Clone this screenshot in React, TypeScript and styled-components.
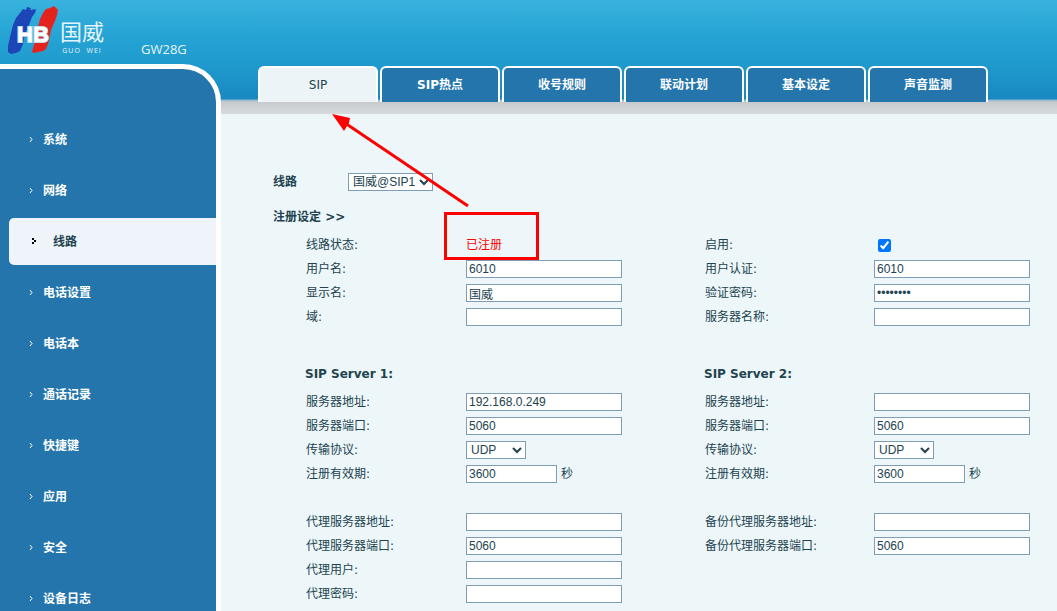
import React from "react";
import styled, { createGlobalStyle, css } from "styled-components";

const GlobalStyle = createGlobalStyle`
  *, *::before, *::after { box-sizing: border-box; }
  body {
    margin: 0;
    color: #21434f;
    background: #edf6f8;
    font: 12px/16px "DejaVu Sans", "Noto Sans CJK SC", sans-serif;
  }
`;

const Shell = styled.div`
  display: flex;
  height: 100vh;
  overflow: hidden;
  background:
    linear-gradient(#3ab2de, #25a4d4 35px, #1e98cc 70px, #1888c2 99px, #8fb9cd 100px, #c5cbce 102px) 0 0 / 100% 102px no-repeat,
    linear-gradient(#c6cacd, #d7dbde) 0 102px / 100% 12px no-repeat,
    #edf6f8;
`;

const Side = styled.div`
  flex: 0 0 221px;
  display: flex;
  flex-direction: column;
`;

const Brand = styled.header`
  flex: none;
  display: flex;
  align-items: flex-end;
  height: 64px;
  padding: 0 0 5px 6px;
  color: #e4f4fb;
`;

const Wordmark = styled.div`
  display: flex;
  flex-direction: column;
  align-items: center;
  width: 44px;
  margin: 0 37px 3px 0;
  font: 22px/32px "Noto Sans CJK SC", sans-serif;
`;

const Latin = styled.span`
  font: 7px/10px "Open Sans", sans-serif;
  letter-spacing: 1px;
  white-space: pre;
`;

const Model = styled.span`
  padding-bottom: 2px;
  font: 13px/16px "Open Sans", sans-serif;
`;

const Nav = styled.nav`
  flex: 1 0 auto;
  display: flex;
  flex-direction: column;
  gap: 4px;
  padding: 47px 0 0 9px;
  border: 5px solid #fff;
  border-width: 5px 5px 0 0;
  border-top-right-radius: 38px;
  background: #2375ac;
`;

const NavItem = styled.a<{ $active?: boolean }>`
  display: flex;
  align-items: center;
  gap: 10px;
  height: 47px;
  padding-left: 20px;
  color: #fff;
  font-weight: 700;
  text-decoration: none;
  ${(p) =>
    p.$active &&
    css`
      gap: 16px;
      padding-left: 22px;
      border-radius: 5px 0 0 5px;
      color: #21434f;
      background: #eff4fa;
    `}
`;

const Main = styled.div`
  flex: 1;
  min-width: 0;
`;

const Tabs = styled.nav`
  display: flex;
  align-items: flex-end;
  gap: 2px;
  height: 102px;
  padding-left: 37px;
`;

const Tab = styled.a<{ $active?: boolean }>`
  display: flex;
  align-items: center;
  justify-content: center;
  width: 120px;
  height: 36px;
  border: 2px solid #fff;
  border-bottom: 0;
  border-radius: 6px 6px 0 0;
  color: ${(p) => (p.$active ? "#21434f" : "#fff")};
  background: ${(p) => (p.$active ? "#edf4f8" : "#2375ac")};
  font-weight: ${(p) => (p.$active ? 400 : 700)};
  text-decoration: none;
`;

const Form = styled.form`
  padding: 70px 27px 0 52px;
`;

const LineRow = styled.div`
  display: flex;
  align-items: center;
  height: 20px;
  font-weight: 700;

  label { width: 75px; }
`;

const SectionTitle = styled.h2`
  margin: 17px 0 8px;
  font: inherit;
  font-weight: 700;
`;

const Columns = styled.div`
  display: grid;
  grid-template-columns: 399px 1fr;
  padding-left: 32px;
`;

const Group = styled.div<{ $labelWidth: number }>`
  display: grid;
  grid-template-columns: ${(p) => p.$labelWidth}px 1fr;
  grid-auto-rows: 24px;
  align-items: center;
  align-content: start;

  label { padding-left: 1px; }
`;

const GroupTitle = styled.h3`
  margin: 0;
  padding: 37px 0 8px;
  font-size: 12px;
  line-height: 16px;
`;

const Control = styled.div`
  display: flex;
  align-items: center;
  gap: 4px;
`;

const fieldLook = css`
  height: 18px;
  margin: 0;
  border: 1px solid #7f9db9;
  border-radius: 0;
  color: #21434f;
  background: #fff;
  font: 12px "Liberation Sans", "Noto Sans CJK SC", sans-serif;
`;

const TextInput = styled.input<{ $short?: boolean }>`
  ${fieldLook}
  width: ${(p) => (p.$short ? 91 : 156)}px;
  padding: 0 2px;
`;

const Select = styled.select<{ $wide?: boolean }>`
  ${fieldLook}
  width: ${(p) => (p.$wide ? 85 : 60)}px;
  padding: 0;
`;

const Check = styled.input`
  width: 13px;
  height: 13px;
  margin: 0 0 0 4px;
  accent-color: #0075ff;
`;

const Status = styled.output`
  color: #f00;
`;

const Annotation = styled.svg`
  position: absolute;
  left: 325px;
  top: 108px;
  pointer-events: none;
`;

const LogoMark = () => (
  <svg width="54" height="54" viewBox="0 0 54 54" aria-hidden="true">
    <path
      d="M14 8 17 4 20 5 21 2 25 3 24 5 30 4 29 8 26 12 23 20 19 29 17 39 14 46 10 48 5 49 2 47 2 41 4 32 7 20 10 13Z"
      fill="#1c46b8"
    />
    <path
      d="M37 8 40 4 44 3 48 1 50 3 52 5 51 10 49 16 45 25 43 36 40 44 37 46 28 48 26 47 28 40 31 26 34 14Z"
      fill="#e5231e"
    />
    <text
      x="11"
      y="37"
      fontFamily="Liberation Sans"
      fontWeight="700"
      fontSize="22"
      fill="#fff"
      stroke="#c3dcf3"
      strokeWidth="2"
      paintOrder="stroke"
    >
      HB
    </text>
  </svg>
);

const Chevron = () => (
  <svg width="4" height="7" viewBox="0 0 4 7" aria-hidden="true">
    <path d="M1 1 3 3.5 1 6" fill="none" stroke="currentColor" strokeWidth="1" />
  </svg>
);

const ActiveMark = () => (
  <svg width="6" height="8" viewBox="0 0 6 8" aria-hidden="true">
    <path d="M1 0h2v2H1zM3 2h2v2H3zM1 4h2v2H1z" fill="#000" />
  </svg>
);

type FieldSpec = {
  id: string;
  label: string;
  value?: string;
  kind?: "status" | "check" | "password" | "select" | "short" | "gap";
};

const Field = ({ id, label, value = "", kind }: FieldSpec) => {
  if (kind === "gap") {
    return (
      <>
        <span />
        <span />
      </>
    );
  }
  return (
    <>
      <label htmlFor={id}>{label}:</label>
      <Control>
        {kind === "status" && <Status id={id}>{value}</Status>}
        {kind === "check" && <Check id={id} type="checkbox" defaultChecked />}
        {kind === "select" && (
          <Select id={id} defaultValue={value}>
            <option>UDP</option>
            <option>TCP</option>
            <option>TLS</option>
          </Select>
        )}
        {kind === "short" && (
          <>
            <TextInput id={id} $short defaultValue={value} />
            秒
          </>
        )}
        {(kind === undefined || kind === "password") && (
          <TextInput id={id} type={kind ?? "text"} defaultValue={value} />
        )}
      </Control>
    </>
  );
};

const Fields = ({ items, labelWidth }: { items: FieldSpec[]; labelWidth: number }) => (
  <Group $labelWidth={labelWidth}>
    {items.map((f) => (
      <Field key={f.id} {...f} />
    ))}
  </Group>
);

const menu = ["系统", "网络", "线路", "电话设置", "电话本", "通话记录", "快捷键", "应用", "安全", "设备日志"];
const tabs = ["SIP", "SIP热点", "收号规则", "联动计划", "基本设定", "声音监测"];

const account: FieldSpec[] = [
  { id: "status", label: "线路状态", value: "已注册", kind: "status" },
  { id: "user", label: "用户名", value: "6010" },
  { id: "display", label: "显示名", value: "国威" },
  { id: "realm", label: "域" },
];
const auth: FieldSpec[] = [
  { id: "enable", label: "启用", kind: "check" },
  { id: "authUser", label: "用户认证", value: "6010" },
  { id: "authPass", label: "验证密码", value: "password", kind: "password" },
  { id: "serverName", label: "服务器名称" },
];
const server = (n: number, address: string): FieldSpec[] => [
  { id: `addr${n}`, label: "服务器地址", value: address },
  { id: `port${n}`, label: "服务器端口", value: "5060" },
  { id: `proto${n}`, label: "传输协议", value: "UDP", kind: "select" },
  { id: `expire${n}`, label: "注册有效期", value: "3600", kind: "short" },
  { id: `gap${n}`, label: "", kind: "gap" },
];
const server1: FieldSpec[] = [
  ...server(1, "192.168.0.249"),
  { id: "proxyAddr", label: "代理服务器地址" },
  { id: "proxyPort", label: "代理服务器端口", value: "5060" },
  { id: "proxyUser", label: "代理用户" },
  { id: "proxyPass", label: "代理密码" },
];
const server2: FieldSpec[] = [
  ...server(2, ""),
  { id: "backupAddr", label: "备份代理服务器地址" },
  { id: "backupPort", label: "备份代理服务器端口", value: "5060" },
];

export default function App() {
  return (
    <>
      <GlobalStyle />
      <Shell>
        <Side>
          <Brand>
            <LogoMark />
            <Wordmark>
              国威
              <Latin>GUO  WEI</Latin>
            </Wordmark>
            <Model>GW28G</Model>
          </Brand>
          <Nav>
            {menu.map((m) => (
              <NavItem key={m} href="#" $active={m === "线路"}>
                {m === "线路" ? <ActiveMark /> : <Chevron />}
                {m}
              </NavItem>
            ))}
          </Nav>
        </Side>
        <Main>
          <Tabs>
            {tabs.map((t) => (
              <Tab key={t} href="#" $active={t === "SIP"}>
                {t}
              </Tab>
            ))}
          </Tabs>
          <Form>
            <LineRow>
              <label htmlFor="line">线路</label>
              <Select id="line" $wide>
                <option>国威@SIP1</option>
              </Select>
            </LineRow>
            <SectionTitle>注册设定 &gt;&gt;</SectionTitle>
            <Columns>
              <Fields items={account} labelWidth={161} />
              <Fields items={auth} labelWidth={170} />
              <GroupTitle>SIP Server 1:</GroupTitle>
              <GroupTitle>SIP Server 2:</GroupTitle>
              <Fields items={server1} labelWidth={161} />
              <Fields items={server2} labelWidth={170} />
            </Columns>
          </Form>
        </Main>
      </Shell>
      <Annotation width="220" height="160" viewBox="0 0 220 160" aria-hidden="true">
        <path d="M143 98 20 15" stroke="#f00" strokeWidth="3" />
        <path d="M7 6 25 10 24 15 19 23Z" fill="#f00" />
        <path d="M119 104h95v48h-95zM122 107v42h89v-42z" fill="#f00" fillRule="evenodd" />
      </Annotation>
    </>
  );
}
